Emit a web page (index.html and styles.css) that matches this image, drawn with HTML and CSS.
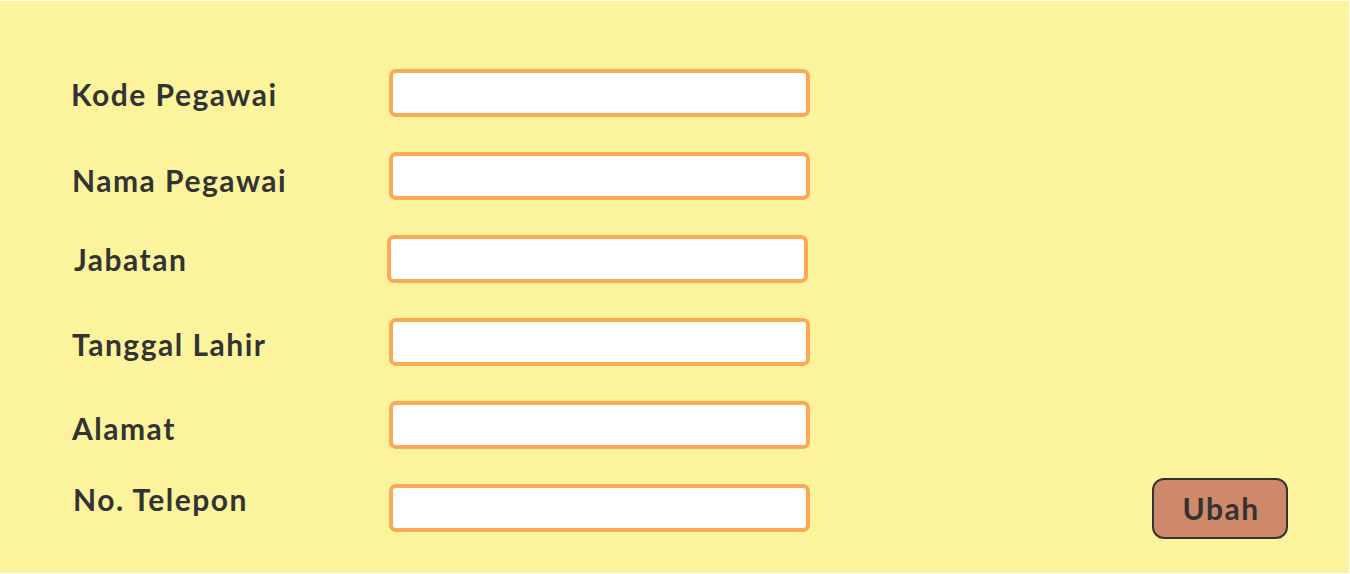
FILE: index.html
```html
<!DOCTYPE html>
<html lang="id">
<head>
<meta charset="utf-8">
<title>Ubah Pegawai</title>
<link rel="stylesheet" href="styles.css">
</head>
<body>
<main class="panel">
  <form class="form">
    <label class="label label-kode" for="kode">Kode Pegawai</label>
    <input class="field" id="kode" type="text">
    <span class="spacer"></span>

    <label class="label label-nama" for="nama">Nama Pegawai</label>
    <input class="field" id="nama" type="text">
    <span class="spacer"></span>

    <label class="label label-j" for="jabatan">Jabatan</label>
    <input class="field field-left" id="jabatan" type="text">
    <span class="spacer"></span>

    <label class="label label-tgl" for="tgl">Tanggal Lahir</label>
    <input class="field" id="tgl" type="text">
    <span class="spacer"></span>

    <label class="label label-alamat" for="alamat">Alamat</label>
    <input class="field" id="alamat" type="text">
    <span class="spacer"></span>

    <label class="label label-high" for="telp">No. Telepon</label>
    <input class="field" id="telp" type="text">
    <div class="actions">
      <button class="btn" type="button">Ubah</button>
    </div>
  </form>
</main>
</body>
</html>
```
FILE: styles.css
```css
html, body {
  margin: 0;
  padding: 0;
  background: #ffffff;
}

body {
  height: 574px;
  overflow: hidden;
}

.panel {
  box-sizing: border-box;
  height: 572px;
  margin: 1px 1px 1px 0;
  background: #fcf49c;
  padding: 68px 61px 0 71px;
  font-family: Lato, "Noto Sans", sans-serif;
  color: #333333;
}

.form {
  display: grid;
  grid-template-columns: 318px 421px 1fr;
  grid-auto-rows: 48px;
  row-gap: 35px;
  align-items: center;
}

.label {
  font-size: 30px;
  font-weight: 700;
  line-height: 34px;
  letter-spacing: 1.5px;
}

.label-kode { margin-top: 2px; }
.label-nama { margin-top: 7px; padding-left: 1px; }
.label-j { margin-top: 0; padding-left: 3px; }
.label-tgl { margin-top: 4px; padding-left: 1px; }
.label-alamat { margin-top: 6px; padding-left: 1px; }
.label-high { margin-top: -19px; padding-left: 2px; }

.field {
  box-sizing: border-box;
  width: 421px;
  height: 48px;
  margin: 0;
  border: 4px solid #fca854;
  border-radius: 7px;
  background: #ffffff;
  outline: none;
}

.field-left { margin-left: -2px; }

.actions {
  display: flex;
  justify-content: flex-end;
}

.btn {
  box-sizing: border-box;
  width: 136px;
  height: 61px;
  border: 2px solid #333333;
  border-radius: 12px;
  background: #d0886a;
  color: #333333;
  font-family: Lato, "Noto Sans", sans-serif;
  font-size: 30px;
  font-weight: 700;
  letter-spacing: 1.5px;
  padding: 0 0 0 2px;
  cursor: pointer;
}
```
